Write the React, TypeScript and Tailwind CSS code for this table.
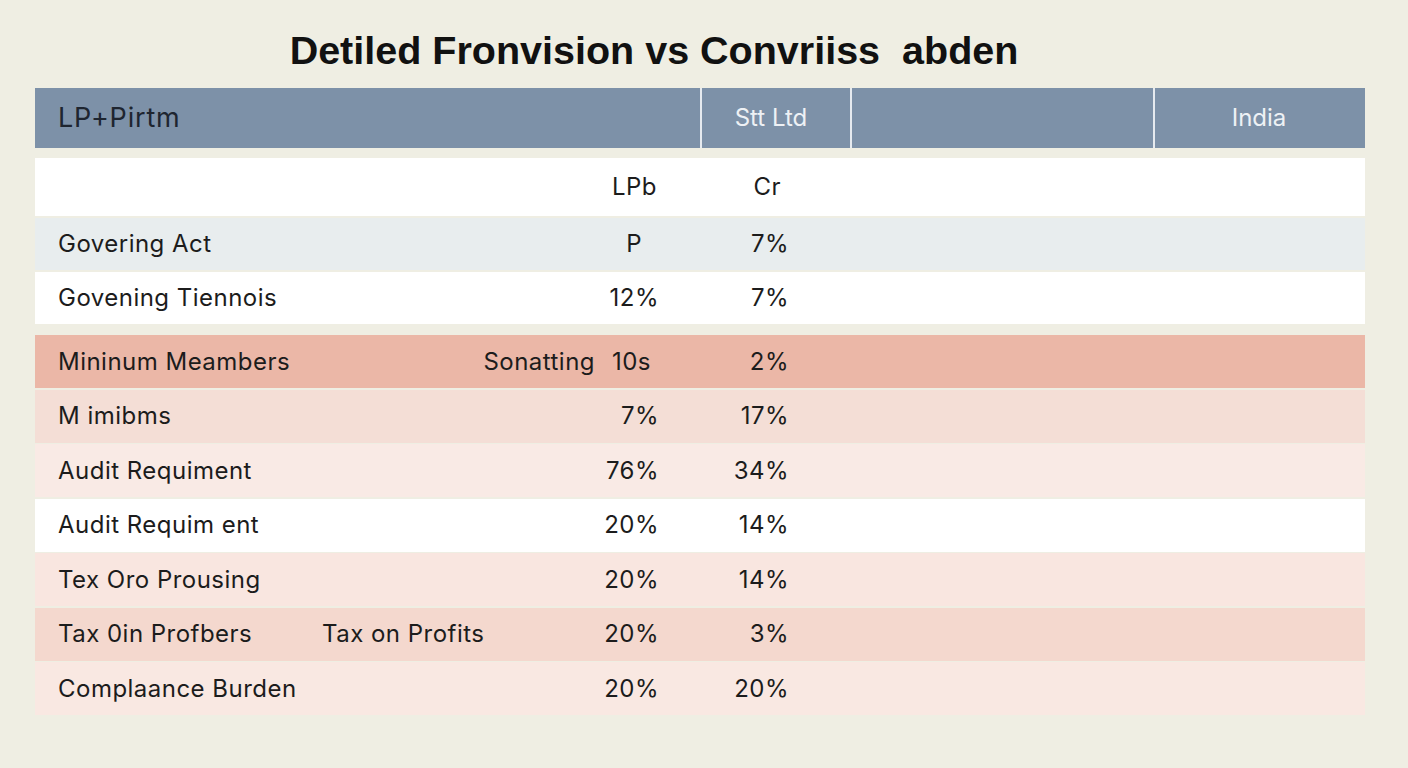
import React from "react";

type Row = {
  label: string;
  mid?: string;
  midAlign?: "left" | "right";
  a: string;
  b: string;
  bg: string;
  h: string;
  aPad?: string;
  bPad?: string;
};

const rows: Row[] = [
  { label: "", a: "LPb", b: "Cr", bg: "bg-white", h: "h-[58px]", aPad: "pr-[2px]", bPad: "pr-[8px]" },
  { label: "Govering Act", a: "P", b: "7%", bg: "bg-[#e8edee]", h: "h-[52px]", aPad: "pr-[17px]" },
  { label: "Govening Tiennois", a: "12%", b: "7%", bg: "bg-white", h: "h-[52px]" },
];

const rows2: Row[] = [
  { label: "Mininum Meambers", mid: "Sonatting", midAlign: "right", a: "10s", b: "2%", bg: "bg-[#ebb7a7]", h: "h-[53px]", aPad: "pr-[8px]" },
  { label: "M imibms", a: "7%", b: "17%", bg: "bg-[#f4ded6]", h: "h-[53px]" },
  { label: "Audit Requiment", a: "76%", b: "34%", bg: "bg-[#f9eae5]", h: "h-[53px]" },
  { label: "Audit Requim ent", a: "20%", b: "14%", bg: "bg-white", h: "h-[53px]" },
  { label: "Tex Oro Prousing", a: "20%", b: "14%", bg: "bg-[#f9e6e0]", h: "h-[53px]" },
  { label: "Tax 0in Profbers", mid: "Tax on Profits", midAlign: "left", a: "20%", b: "3%", bg: "bg-[#f4d8ce]", h: "h-[53px]" },
  { label: "Complaance Burden", a: "20%", b: "20%", bg: "bg-[#f9e8e2]", h: "h-[53px]" },
];

const TableRow = ({ row }: { row: Row }) => (
  <div className={`flex items-center text-[24px] tracking-[0.02em] text-[#1c1c1c] ${row.h} ${row.bg}`}>
    <div className="w-[287px] pl-[23px] whitespace-nowrap">{row.label}</div>
    <div className={`w-[277px] whitespace-nowrap ${row.midAlign === "right" ? "text-right pr-[4px]" : "text-left"}`}>
      {row.mid ?? ""}
    </div>
    <div className={`w-[60px] text-right whitespace-nowrap ${row.aPad ?? ""}`}>{row.a}</div>
    <div className={`w-[130px] text-right whitespace-nowrap ${row.bPad ?? ""}`}>{row.b}</div>
    <div className="flex-1" />
  </div>
);

export default function App() {
  return (
    <div className="w-[1408px] h-[768px] bg-[#efeee3] overflow-hidden" style={{ fontFamily: "Inter, sans-serif" }}>
      <div className="pt-[30px] pr-[100px] text-center">
        <h1
          className="text-[39.5px] leading-[40px] font-bold text-[#111] whitespace-pre"
          style={{ fontFamily: "'Liberation Sans', Arial, sans-serif" }}
        >
          {"Detiled Fronvision vs Convriiss  abden"}
        </h1>
      </div>

      <div className="mx-[35px] mt-[18px] w-[1330px]">
        {/* Header */}
        <div className="flex h-[60px] bg-[#7d91a8]">
          <div className="w-[665px] flex items-center pl-[23px] text-[27px] tracking-[0.03em] text-[#1e2530]">
            LP+Pirtm
          </div>
          <div className="w-[150px] border-l-2 border-[#e6eaef] flex items-center justify-center pr-[10px] text-[24px] text-[#eef1f5]">
            Stt Ltd
          </div>
          <div className="w-[303px] border-l-2 border-[#e6eaef]" />
          <div className="flex-1 border-l-2 border-[#e6eaef] flex items-center justify-center pr-[2px] text-[24px] text-[#eef1f5]">
            India
          </div>
        </div>

        <div className="mt-[10px] flex flex-col gap-[2px]">
          {rows.map((r, i) => (
            <TableRow key={i} row={r} />
          ))}
        </div>

        <div className="mt-[11px] flex flex-col gap-[1.5px]">
          {rows2.map((r, i) => (
            <TableRow key={i} row={r} />
          ))}
        </div>
      </div>
    </div>
  );
}
